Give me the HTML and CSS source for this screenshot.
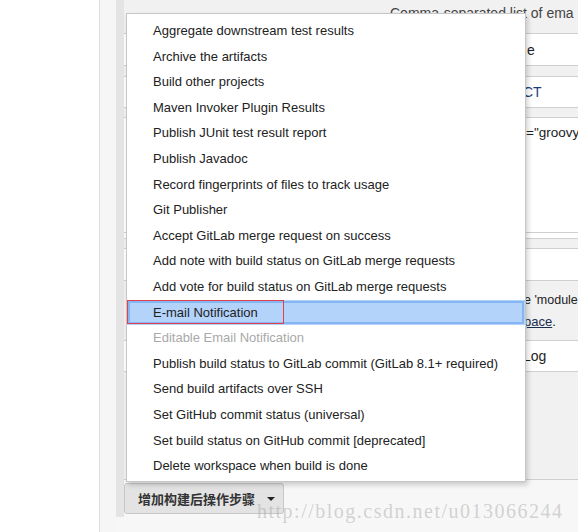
FILE: index.html
```html
<!DOCTYPE html>
<html>
<head>
<meta charset="utf-8">
<link rel="stylesheet" href="styles.css">
</head>
<body>
<div class="page">
  <div class="blank"></div>
  <div class="side-pad"></div>
  <div class="panel">
    <div class="strip"></div>
    <div class="content">
      <div class="rows">
        <div class="row gray help-top"><span class="help-text">Comma-separated list of ema</span></div>
        <div class="row white h31 bt"><span class="val at527">e</span></div>
        <div class="row gray h10 bt"></div>
        <div class="row white h30 bt"><span class="val at523 blue">CT</span></div>
        <div class="row gray h9 bt"></div>
        <div class="row white h114 bt top-text"><span class="val at526">="groovy</span></div>
        <div class="row white h5 bt"></div>
        <div class="row gray h9 bt"></div>
        <div class="row white h31 bt"></div>
        <div class="row gray h60 bt two-lines">
          <span class="val at524 small">e 'module</span>
          <span class="val at524 link">pace</span><span class="dot">.</span>
        </div>
        <div class="row white h30 bt"><span class="val at523">Log</span></div>
        <div class="row gray h107 bt bb"></div>
      </div>
      <div class="actions">
        <button class="add-btn">增加构建后操作步骤<span class="caret"></span></button>
      </div>
    </div>
  </div>

  <ul class="menu">
    <li>Aggregate downstream test results</li>
    <li>Archive the artifacts</li>
    <li>Build other projects</li>
    <li>Maven Invoker Plugin Results</li>
    <li>Publish JUnit test result report</li>
    <li>Publish Javadoc</li>
    <li>Record fingerprints of files to track usage</li>
    <li>Git Publisher</li>
    <li>Accept GitLab merge request on success</li>
    <li>Add note with build status on GitLab merge requests</li>
    <li>Add vote for build status on GitLab merge requests</li>
    <li class="selected">E-mail Notification<span class="mark"></span></li>
    <li class="disabled">Editable Email Notification</li>
    <li>Publish build status to GitLab commit (GitLab 8.1+ required)</li>
    <li>Send build artifacts over SSH</li>
    <li>Set GitHub commit status (universal)</li>
    <li>Set build status on GitHub commit [deprecated]</li>
    <li>Delete workspace when build is done</li>
  </ul>

  <div class="watermark">http://blog.csdn.net/u013066244</div>
</div>
</body>
</html>
```

FILE: styles.css
```css
html, body {
  margin: 0;
  padding: 0;
  background: #ffffff;
}
body {
  width: 578px;
  height: 532px;
  overflow: hidden;
  font-family: "Liberation Sans", Arial, sans-serif;
}
.page {
  position: relative;
  display: flex;
  width: 578px;
  height: 532px;
}
.blank {
  width: 99px;
  flex: none;
  background: #ffffff;
  border-right: 1px solid #dedede;
}
.side-pad {
  width: 16px;
  flex: none;
  background: #f6f6f6;
}
.panel {
  flex: 1;
  display: flex;
  align-items: flex-start;
  background: #f7f7f7;
}
.strip {
  width: 8px;
  height: 517px;
  flex: none;
  background: #e4e4e4;
}
.content {
  flex: 1;
  display: flex;
  flex-direction: column;
}
.rows {
  display: flex;
  flex-direction: column;
}
.row {
  position: relative;
  display: flex;
  align-items: center;
  font-size: 14px;
  color: #222;
  white-space: nowrap;
  overflow: hidden;
}
.gray { background: #f1f1f1; }
.white { background: #ffffff; }
.bt { border-top: 1px solid #cfcfcf; }
.bb { border-bottom: 1px solid #cfcfcf; }
.help-top { height: 33px; align-items: flex-start; }
.help-text {
  padding-left: 266px;
  padding-top: 5px;
  font-size: 14px;
  color: #444;
}
.h5 { height: 5px; }
.h9 { height: 9px; }
.h10 { height: 10px; }
.h30 { height: 30px; }
.h31 { height: 31px; }
.h60 { height: 60px; }
.h107 { height: 107px; }
.h114 { height: 114px; }
.top-text { align-items: flex-start; }
.top-text .val { padding-top: 7px; font-size: 13.5px; }
.at523 { padding-left: 399px; }
.at524 { padding-left: 400px; }
.at525 { padding-left: 401px; }
.at526 { padding-left: 402px; }
.at527 { padding-left: 403px; }
.blue { color: #1c3f78; }
.two-lines {
  display: block;
  padding-top: 9px;
  box-sizing: border-box;
  line-height: 21px;
  font-size: 13px;
}
.two-lines .val { display: block; }
.two-lines .small { font-size: 12.5px; }
.two-lines .link {
  display: inline-block;
  text-decoration: underline;
  color: #1a2f50;
}
.two-lines .dot { color: #222; }

.actions {
  padding-top: 3px;
}
.add-btn {
  display: flex;
  align-items: center;
  box-sizing: border-box;
  width: 160px;
  height: 31px;
  margin: 0;
  padding: 0 0 0 13px;
  border: 1px solid #c8c8c8;
  border-radius: 3px;
  background: #e3e3e3;
  color: #333;
  font-family: "Noto Sans CJK SC", sans-serif;
  font-size: 13px;
  font-weight: 700;
  line-height: 1;
}
.caret {
  width: 0;
  height: 0;
  margin-left: 12px;
  border-left: 4px solid transparent;
  border-right: 4px solid transparent;
  border-top: 4px solid #222;
}

.menu {
  position: absolute;
  left: 126px;
  top: 13px;
  width: 400px;
  height: 469px;
  box-sizing: border-box;
  margin: 0;
  padding: 4px 0 2px;
  list-style: none;
  background: #ffffff;
  border: 1px solid #c6c6c6;
  box-shadow: 2px 3px 5px rgba(0, 0, 0, 0.18);
}
.menu li {
  position: relative;
  height: 25.6px;
  line-height: 25.6px;
  padding-left: 26px;
  font-size: 13px;
  color: #222;
  white-space: nowrap;
}
.menu li.disabled { color: #a9a9a9; }
.menu li.selected {
  background: #b3d3fb;
  outline: 2px solid #86b6f2;
  outline-offset: -3px;
}
.mark {
  position: absolute;
  left: 0;
  top: 0;
  width: 157px;
  height: 24px;
  box-sizing: border-box;
  border: 1px solid #e0404c;
}

.watermark {
  position: absolute;
  left: 257px;
  top: 500px;
  font-family: "Liberation Serif", serif;
  font-size: 20px;
  letter-spacing: 1.5px;
  color: rgba(150, 150, 150, 0.4);
  white-space: nowrap;
}
```
